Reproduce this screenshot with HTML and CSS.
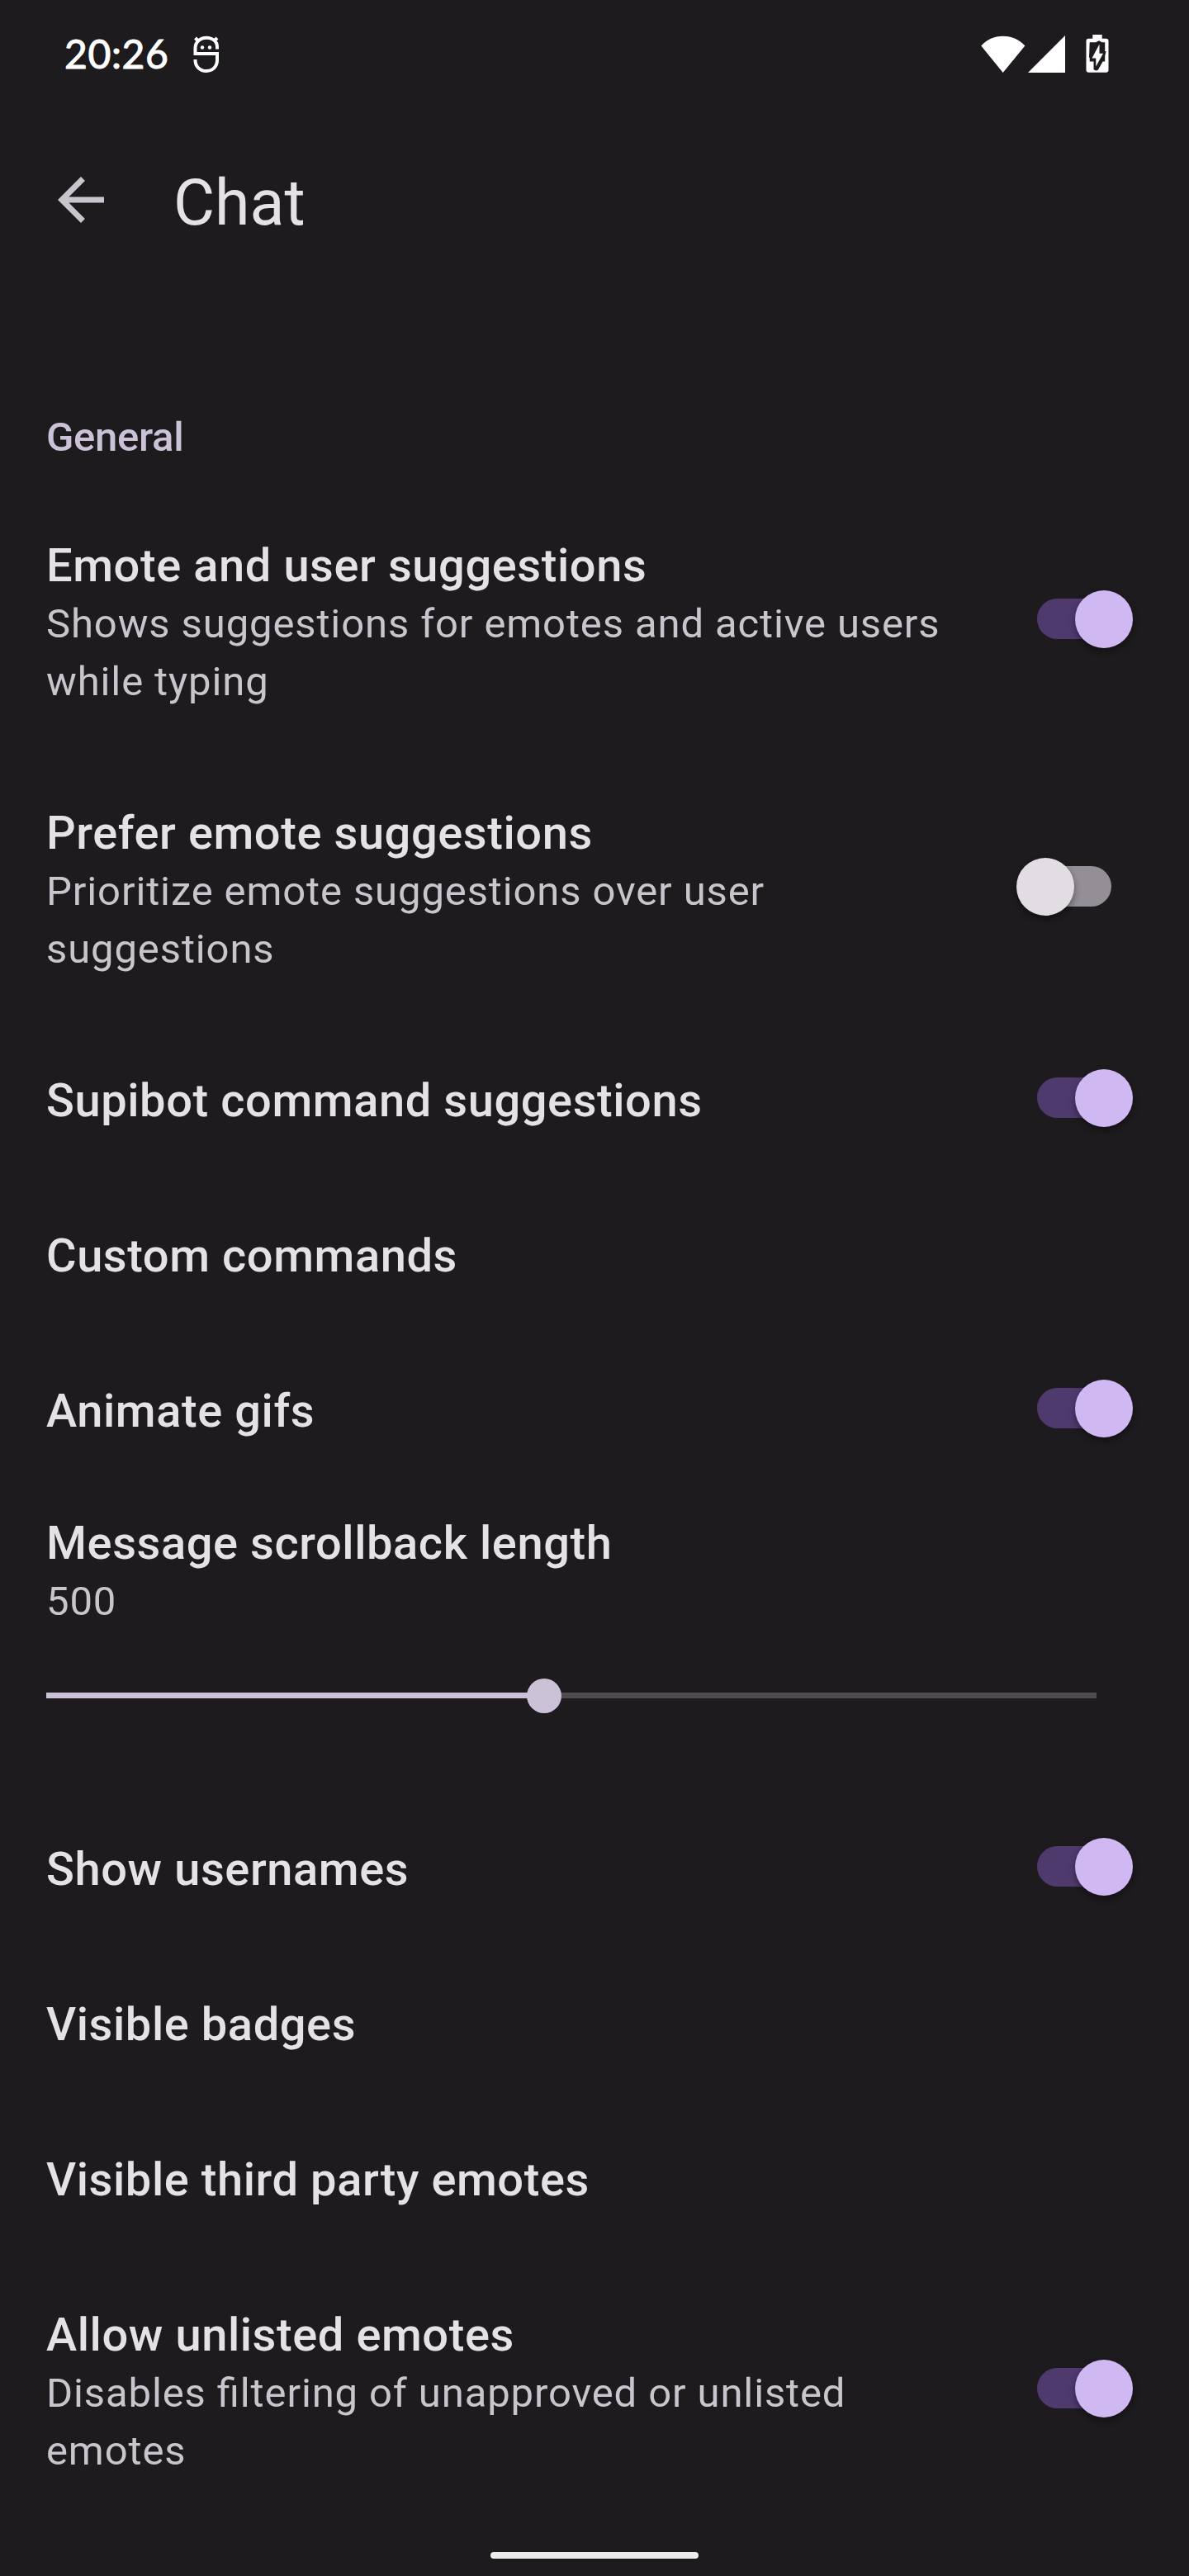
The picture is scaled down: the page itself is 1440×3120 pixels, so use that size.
FILE: index.html
```html
<!DOCTYPE html>
<html lang="en">
<head>
<meta charset="utf-8">
<title>Chat</title>
<link rel="stylesheet" href="styles.css">
</head>
<body>
<div class="screen">
  <header class="status">
    <span class="clock">20:26</span>
    <svg class="notif" width="32" height="46" viewBox="0 0 32 46" fill="none" stroke="#fff" stroke-width="4">
      <path d="M29 16.500V14C29 7 23.500 2.800 16 2.800S2.500 8 2.500 15.500V22H29V30C29 37.500 23.500 43 15.800 43S2.500 37.500 2.500 30V29"/>
      <path d="M2.500 3L6 6.500M29 3L25.500 6.500"/>
      <circle cx="11" cy="14.500" r="2.200" fill="#fff" stroke="none"/>
      <circle cx="20" cy="14.500" r="2.200" fill="#fff" stroke="none"/>
    </svg>
    <svg class="wifi" width="54" height="46" viewBox="0 0 54 46" fill="#fff"><path d="M.3 12.500C7 5 16 .8 26.700 .8S46.500 5 53.300 12.500L26.700 45Z"/></svg>
    <svg class="signal" width="45" height="45" viewBox="0 0 45 45" fill="#fff"><path d="M0 45H45V0Z"/></svg>
    <svg class="battery" width="28" height="46" viewBox="0 0 28 46">
      <path fill="#fff" d="M8.300 0H19.700V4.700H24.500Q27.500 4.700 27.500 7.700V42.800Q27.500 45.800 24.500 45.800H3.500Q.5 45.800 .5 42.800V7.700Q.5 4.700 3.500 4.700H8.300Z"/>
      <path fill="#1e1b1e" d="M4.700 9.200H12L16 7.300L19.500 9.200H23.200V20H24.500L23.700 24L23.200 25V32.500H20.500L15 42.500Q12 44.500 9.500 42V32.500H4.700V28L4 27.500Z"/>
      <path fill="#fff" d="M16.500 11.500V22.800H21L12.300 38.500V28.500H7.500Z"/>
    </svg>
  </header>
  <div class="toolbar">
    <svg class="back" width="56" height="56" viewBox="0 0 16 16" fill="#cac5cd"><path d="M16 7H3.830l5.590-5.590L8 0 0 8l8 8 1.410-1.410L3.830 9H16z"/></svg>
    <h1 class="title">Chat</h1>
  </div>
  <h2 class="category">General</h2>
  <main class="prefs">
    <div class="pref"><div class="text"><div class="name">Emote and user suggestions</div><div class="summary">Shows suggestions for emotes and active users<br>while typing</div></div><div class="switch on"><span class="thumb"></span></div></div>
    <div class="pref"><div class="text"><div class="name">Prefer emote suggestions</div><div class="summary">Prioritize emote suggestions over user<br>suggestions</div></div><div class="switch"><span class="thumb"></span></div></div>
    <div class="pref"><div class="text"><div class="name">Supibot command suggestions</div></div><div class="switch on"><span class="thumb"></span></div></div>
    <div class="pref"><div class="text"><div class="name">Custom commands</div></div></div>
    <div class="pref"><div class="text"><div class="name">Animate gifs</div></div><div class="switch on"><span class="thumb"></span></div></div>
    <div class="pref seek"><div class="text"><div class="name">Message scrollback length</div><div class="summary">500</div></div>
      <div class="slider"><div class="fill"></div><span class="knob"></span></div></div>
    <div class="pref"><div class="text"><div class="name">Show usernames</div></div><div class="switch on"><span class="thumb"></span></div></div>
    <div class="pref"><div class="text"><div class="name">Visible badges</div></div></div>
    <div class="pref"><div class="text"><div class="name">Visible third party emotes</div></div></div>
    <div class="pref"><div class="text"><div class="name">Allow unlisted emotes</div><div class="summary">Disables filtering of unapproved or unlisted<br>emotes</div></div><div class="switch on"><span class="thumb"></span></div></div>
  </main>
  <div class="gesture"></div>
</div>
</body>
</html>
```
FILE: styles.css
```css
* { box-sizing: border-box; }
body { margin: 0; background: #1e1b1e; font-family: Roboto, "Liberation Sans", sans-serif; color: #e6e1e5; }
.screen { width: 1440px; height: 3120px; overflow: hidden; display: flex; flex-direction: column; }
.status { height: 133px; flex: none; display: flex; align-items: flex-start; padding: 0 97px 0 78px; }
.clock { width: 156px; padding-top: 35px; font: 400 48px/60px Lato, sans-serif; color: #fff; letter-spacing: .6px; -webkit-text-stroke: 1px #fff; white-space: nowrap; }
.notif { margin-top: 43px; }
.wifi { margin: 43px 0 0 auto; }
.signal { margin: 43px 0 0 3px; }
.battery { margin: 42px 0 0 25px; }
.toolbar { height: 224px; flex: none; display: flex; align-items: center; padding: 2px 70px 0; }
.back { margin-bottom: 8px; }
.title { margin: 0 0 0 84px; font-weight: 400; font-size: 77px; line-height: 90px; }
.category { margin: 0; padding: 143px 56px 0; height: 232px; flex: none; font-weight: 500; font-size: 49px; line-height: 60px; letter-spacing: -.3px; color: #cbc2d7; }
.prefs { flex: none; }
.pref { display: flex; align-items: center; justify-content: space-between; padding: 56px 94px 52px 56px; }
.name { font-size: 56px; font-weight: 500; line-height: 80px; letter-spacing: .58px; white-space: nowrap; }
.summary { margin-top: -4px; font-size: 49px; line-height: 70px; letter-spacing: .88px; color: #cac5cd; white-space: nowrap; font-feature-settings: "liga" 1; }
.switch { position: relative; width: 90px; height: 49px; margin-bottom: 7px; border-radius: 25px; background: #948f96; }
.switch.on { background: #4f3a6e; }
.thumb { position: absolute; left: -25px; top: -10px; width: 70px; height: 70px; border-radius: 50%; background: #e2dde2; box-shadow: 0 4px 8px rgba(0, 0, 0, .4); }
.on .thumb { left: 46px; background: #d0b8f2; }
.seek { flex-direction: column; align-items: flex-start; justify-content: flex-start; height: 367px; padding-top: 28px; padding-bottom: 0; }
.slider { position: relative; width: 1272px; height: 7px; margin-top: 75px; background: #504d52; }
.fill { width: 603px; height: 7px; background: #cbc2d7; }
.knob { position: absolute; left: 582px; top: -17px; width: 42px; height: 42px; border-radius: 50%; background: #cbc2d7; }
.gesture { width: 252px; height: 8px; margin: 35px auto 0; border-radius: 4px; background: #ececec; }
```
